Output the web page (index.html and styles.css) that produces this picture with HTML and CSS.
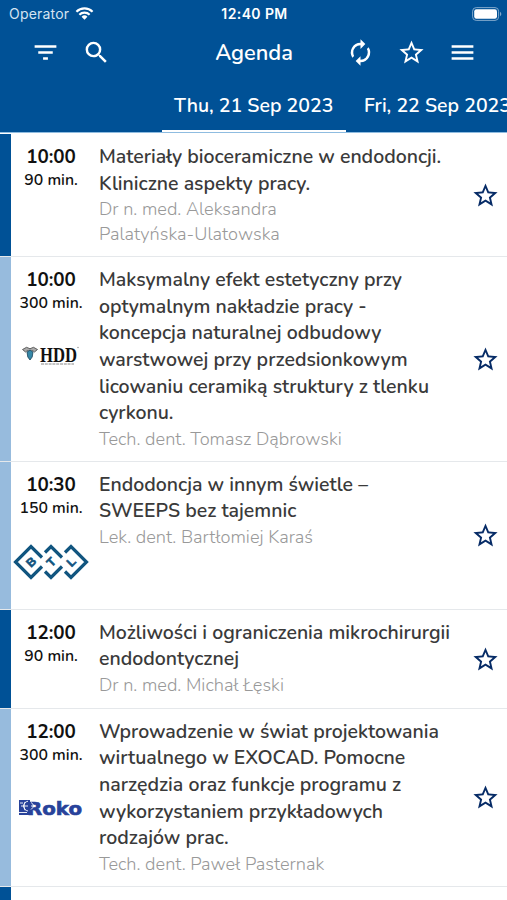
FILE: index.html
```html
<!DOCTYPE html>
<html lang="pl">
<head>
  <meta charset="UTF-8" />
  <meta name="viewport" content="width=device-width, initial-scale=1.0"/>
  <title>Agenda</title>
  <link rel="stylesheet" href="styles.css">
</head>
<body>
  <!-- Shared icon shapes -->
  <svg class="sprite" width="0" height="0">
    <symbol id="star" viewBox="0 0 24 24">
      <path d="M22 9.24l-7.19-.62L12 2 9.19 8.63 2 9.24l5.46 4.73L5.82 21 12 17.27 18.18 21l-1.63-7.03L22 9.24zM12 15.4l-3.76 2.27 1-4.28-3.32-2.88 4.38-.38L12 6.1l1.71 4.04 4.38.38-3.32 2.88 1 4.28L12 15.4z"/>
    </symbol>
  </svg>

  <header class="header">
    <!-- Phone status -->
    <div class="status">
      <div class="status-left">
        <span class="operator">Operator</span>
        <svg class="wifi" viewBox="0 0 20 15">
          <path d="M1.5 5.6a12 12 0 0 1 17 0M4.6 8.8a7.7 7.7 0 0 1 10.8 0" fill="none" stroke="#fff" stroke-width="2.3"/>
          <path d="M6.9 11a4.4 4.4 0 0 1 6.2 0L10 14.2z" fill="#fff"/>
        </svg>
      </div>
      <span class="clock">12:40 PM</span>
      <svg class="battery" viewBox="0 0 30 14">
        <rect x=".6" y=".6" width="26" height="12.8" rx="3.6" fill="none" stroke="#7fa8cc" stroke-width="1"/>
        <rect x="2.2" y="2.2" width="22.8" height="9.6" rx="2.2" fill="#fff"/>
        <path d="M28 4.8c1.8.7 1.8 3.7 0 4.4z" fill="#7fa8cc"/>
      </svg>
    </div>

    <!-- Toolbar -->
    <div class="toolbar">
      <div class="tools">
        <svg class="icon" viewBox="0 0 24 24"><path d="M10 18h4v-2h-4v2zM3 6v2h18V6H3zm3 7h12v-2H6v2z"/></svg>
        <svg class="icon" viewBox="0 0 24 24"><path d="M15.5 14h-.79l-.28-.27A6.47 6.47 0 0 0 16 9.5 6.5 6.5 0 1 0 9.5 16c1.61 0 3.09-.59 4.23-1.57l.27.28v.79l5 4.99L20.49 19l-4.99-5zm-6 0a4.5 4.5 0 1 1 0-9 4.5 4.5 0 0 1 0 9z"/></svg>
      </div>
      <h1 class="page-title">Agenda</h1>
      <div class="tools">
        <svg class="icon" viewBox="0 0 24 24"><path d="M12 6v3l4-4-4-4v3a8 8 0 0 0-6.76 12.26l1.46-1.46A5.9 5.9 0 0 1 6 12a6 6 0 0 1 6-6zm6.76 1.74L17.3 9.2c.44.84.7 1.79.7 2.8a6 6 0 0 1-6 6v-3l-4 4 4 4v-3a8 8 0 0 0 6.76-12.26z"/></svg>
        <svg class="icon"><use href="#star"/></svg>
        <svg class="icon" viewBox="0 0 24 24"><path d="M3 18h18v-2H3v2zm0-5h18v-2H3v2zm0-7v2h18V6H3z"/></svg>
      </div>
    </div>

    <!-- Days -->
    <nav class="tabs">
      <a class="tab active">Thu, 21 Sep 2023</a>
      <a class="tab">Fri, 22 Sep 2023</a>
    </nav>
  </header>

  <main class="agenda">
    <article class="session main-track">
      <div class="when"><b class="time">10:00</b><span class="length">90 min.</span></div>
      <div class="info">
        <h2 class="title">Materiały bioceramiczne w endodoncji.<br>Kliniczne aspekty pracy.</h2>
        <p class="speaker">Dr n. med. Aleksandra<br>Palatyńska-Ulatowska</p>
      </div>
      <svg class="icon star"><use href="#star"/></svg>
    </article>

    <article class="session">
      <div class="when">
        <b class="time">10:00</b><span class="length">300 min.</span>
        <svg class="logo logo-hdd" viewBox="0 0 60 24">
          <path d="M1.5 5.5l4-2.2 3.5 1.4 3.5-1.4 4 2.2-3 2.5-2-1.5-2.5 2-2.5-2-2 1.5z" fill="#aaa" stroke="#444" stroke-width=".8"/>
          <path d="M6 8l3-2 3 2-.8 5L9 16l-2.2-3z" fill="#3688a8" stroke="#173f57" stroke-width=".8"/>
          <text x="19" y="17.5" class="hdd-text" textLength="37" lengthAdjust="spacingAndGlyphs">HDD</text>
          <path d="M20 20h33" stroke="#888" stroke-width="1" stroke-dasharray="3 .8"/>
          <circle cx="57" cy="3.5" r=".7" fill="#888"/>
        </svg>
      </div>
      <div class="info">
        <h2 class="title">Maksymalny efekt estetyczny przy<br>optymalnym nakładzie pracy -<br>koncepcja naturalnej odbudowy<br>warstwowej przy przedsionkowym<br>licowaniu ceramiką struktury z tlenku<br>cyrkonu.</h2>
        <p class="speaker">Tech. dent. Tomasz Dąbrowski</p>
      </div>
      <svg class="icon star"><use href="#star"/></svg>
    </article>

    <article class="session">
      <div class="when">
        <b class="time">10:30</b><span class="length">150 min.</span>
        <svg class="logo logo-btl" viewBox="0 0 76 36">
          <g fill="none" stroke="#11557f" stroke-width="3.2">
            <path d="M29 13.5L18 2.5 2.5 18 18 33.5 29 22.5"/>
            <path d="M32 8.5L38 2.5l11 11M32 27.5L38 33.5 49 22.5"/>
            <path d="M52 8.5L58 2.5 73.5 18 58 33.5 52 27.5"/>
          </g>
          <text class="btl-text" transform="translate(18 18) rotate(-45)" y="4.2">B</text>
          <text class="btl-text" transform="translate(38 18) rotate(-45)" y="4.2">T</text>
          <text class="btl-text" transform="translate(58 18) rotate(-45)" y="4.2">L</text>
        </svg>
      </div>
      <div class="info">
        <h2 class="title">Endodoncja w innym świetle –<br>SWEEPS bez tajemnic</h2>
        <p class="speaker">Lek. dent. Bartłomiej Karaś</p>
      </div>
      <svg class="icon star"><use href="#star"/></svg>
    </article>

    <article class="session main-track">
      <div class="when"><b class="time">12:00</b><span class="length">90 min.</span></div>
      <div class="info">
        <h2 class="title">Możliwości i ograniczenia mikrochirurgii<br>endodontycznej</h2>
        <p class="speaker">Dr n. med. Michał Łęski</p>
      </div>
      <svg class="icon star"><use href="#star"/></svg>
    </article>

    <article class="session">
      <div class="when">
        <b class="time">12:00</b><span class="length">300 min.</span>
        <svg class="logo logo-roko" viewBox="0 0 64 18">
          <path d="M0 1h11v15H0z" fill="#28429a"/>
          <text x="8" y="15.7" class="roko-text" textLength="55" lengthAdjust="spacingAndGlyphs">Roko</text>
          <path d="M9 2.2A5 5 0 0 0 9 12M6 2.8q-3 4.200 0 8.500M2 7h7M12 3.500q5 3 0 7M12 7h4M0 13.5h8M1 4h3" fill="none" stroke="#fff" stroke-width=".9"/>
        </svg>
      </div>
      <div class="info">
        <h2 class="title">Wprowadzenie w świat projektowania<br>wirtualnego w EXOCAD. Pomocne<br>narzędzia oraz funkcje programu z<br>wykorzystaniem przykładowych<br>rodzajów prac.</h2>
        <p class="speaker">Tech. dent. Paweł Pasternak</p>
      </div>
      <svg class="icon star"><use href="#star"/></svg>
    </article>

    <div class="next-session"></div>
  </main>
</body>
</html>
```

FILE: styles.css
```css
* {
  box-sizing: border-box;
}

body {
  margin: 0;
  height: 900px;
  overflow: hidden;
  background: #fff;
  font-family: Nunito, Lato, "Noto Sans", sans-serif;
  color: #3a3a3a;
}

.sprite {
  position: absolute;
}

.icon {
  width: 29px;
  height: 29px;
  fill: currentColor;
  flex: none;
}

/* Header */
.header {
  height: 133px;
  background: #005196;
  color: #fff;
  border-bottom: 1px solid #8fbce0;
}
.status {
  height: 27px;
  padding: 0 5px 0 9px;
  display: grid;
  grid-template-columns: 1fr auto 1fr;
  align-items: center;
  font-family: Inter, sans-serif;
  font-size: 14px;
}
.status-left {
  display: flex;
  align-items: center;
  gap: 6px;
}
.operator {
  color: #d5e4f2;
  letter-spacing: 0.2px;
}
.wifi {
  width: 19px;
  height: 15px;
}
.clock {
  font-weight: 600;
  letter-spacing: 0.4px;
  margin-left: -2px;
}
.battery {
  width: 30px;
  height: 14px;
  justify-self: end;
}
.toolbar {
  height: 51px;
  padding: 0 30px 0 31px;
  display: grid;
  grid-template-columns: 1fr auto 1fr;
  align-items: center;
}
.tools {
  display: flex;
  gap: 22px;
}
.tools:last-child {
  justify-content: flex-end;
}
.page-title {
  margin: 0;
  font-size: 21.8px;
  font-weight: 600;
}
.tabs {
  height: 54px;
  padding-left: 162px;
  display: flex;
  overflow: hidden;
}
.tab {
  flex: none;
  width: 184px;
  padding-left: 12px;
  line-height: 56px;
  font-size: 19.5px;
  font-weight: 600;
  white-space: nowrap;
}
.tab + .tab {
  padding-left: 18px;
}
.tab.active {
  border-bottom: 2px solid #fff;
}

/* Sessions */
.agenda {
  padding-top: 1px;
}
.session {
  display: flex;
  align-items: center;
  border-left: 11px solid #97bbdd;
  padding: 10px 7px 10px 0;
  position: relative;
}
.session.main-track {
  border-left-color: #005196;
  min-height: 99px;
}
/* Divider runs over the track colour */
.session::after {
  content: "";
  position: absolute;
  left: -11px;
  right: 0;
  bottom: 0;
  height: 1px;
  background: #e5e8eb;
}
.next-session {
  height: 13px;
  border-left: 11px solid #005196;
}
.when {
  width: 80px;
  align-self: stretch;
  display: flex;
  flex-direction: column;
  align-items: center;
  padding-top: 1px;
  color: #111;
}
.time {
  font-size: 18.8px;
  line-height: 25px;
  font-weight: 700;
}
.length {
  font-size: 15.8px;
  line-height: 20px;
  font-weight: 600;
}
.info {
  flex: 1;
  padding-left: 8px;
  align-self: flex-start;
  white-space: nowrap;
}
.title {
  margin: 0;
  font-size: 19.5px;
  line-height: 26.6px;
  font-weight: 600;
}
.speaker {
  margin: 0;
  font-size: 18.2px;
  line-height: 25px;
  font-weight: 300;
  color: #999;
}
.star {
  color: #062b66;
}

/* Sponsor logos */
.logo {
  flex: none;
}
.logo-hdd {
  width: 60px;
  height: 24px;
  margin-top: 31px;
}
.hdd-text {
  font: bold 21px "Liberation Serif", serif;
  fill: #111;
}
.logo-btl {
  width: 76px;
  height: 36px;
  margin: 26px 0 20px;
}
.btl-text {
  font: bold 12px "Liberation Sans", sans-serif;
  fill: #11557f;
  stroke: #11557f;
  stroke-width: 0.6px;
  text-anchor: middle;
}
.logo-roko {
  width: 64px;
  height: 18px;
  margin-top: 34px;
}
.roko-text {
  font: bold 17px "DejaVu Sans", sans-serif;
  fill: #28429a;
  stroke: #28429a;
  stroke-width: 0.6px;
}
```
